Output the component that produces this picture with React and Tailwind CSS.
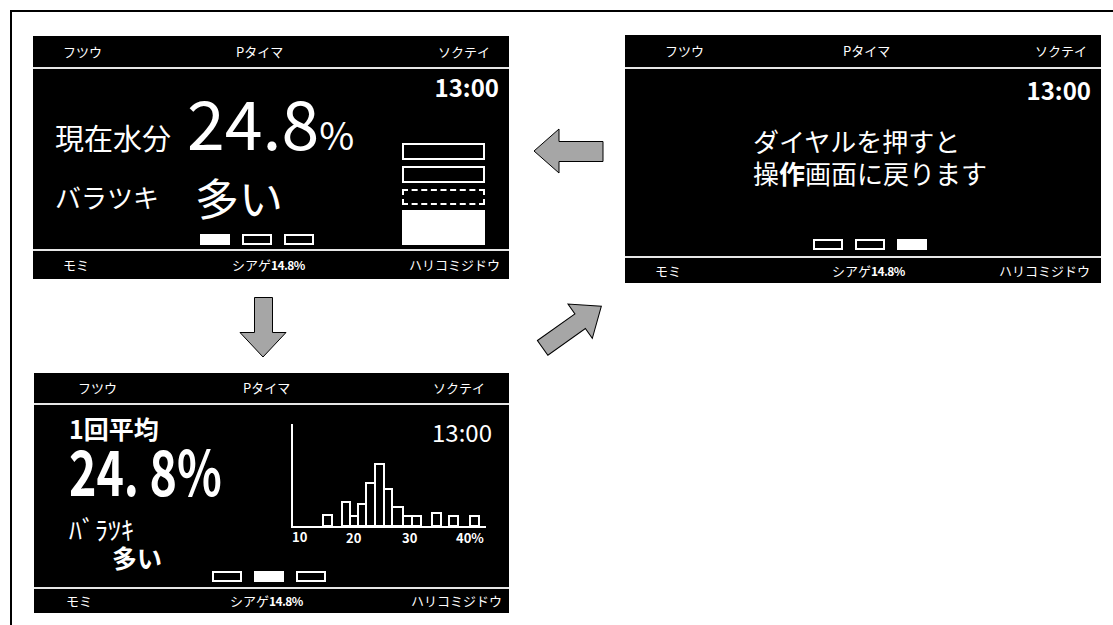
const jp = "font-['Noto_Sans_CJK_JP','Noto_Sans',sans-serif]";

function Rule() {
  return <div className="h-[2px] bg-[#e6e6e6]" />;
}

function Dots({ active, className }) {
  return (
    <div className={`flex gap-[12px] ${className}`}>
      {[0, 1, 2].map((i) => (
        <div
          key={i}
          className={`h-[11px] w-[30px] border-2 border-white ${i === active ? "bg-white" : ""}`}
        />
      ))}
    </div>
  );
}

function DownArrow() {
  return (
    <svg width="48" height="61" viewBox="0 0 48 61" className="block">
      <path d="M15.5 0.5H33.5V35.5H47L24 60L1 35.5H15.5Z" fill="#a6a6a6" stroke="#000" strokeWidth="1" />
    </svg>
  );
}

function LeftArrow() {
  return (
    <svg width="71" height="46" viewBox="0 0 71 46" className="block">
      <path d="M1 23L26 1V13.5H70V33.5H26V45Z" fill="#a6a6a6" stroke="#000" strokeWidth="1" />
    </svg>
  );
}

function DiagArrow() {
  return (
    <svg width="70" height="60" viewBox="0 0 70 60" className="block overflow-visible">
      <g transform="rotate(-35.4 35 30)">
        <path d="M-1 21H45V9L71 30L45 51V39H-1Z" fill="#a6a6a6" stroke="#000" strokeWidth="1" />
      </g>
    </svg>
  );
}

const bars = [
  [33, 93, 9],
  [52, 80, 8],
  [60, 94, 8],
  [68, 82, 8],
  [76, 61, 9],
  [85, 42, 9],
  [94, 67, 8],
  [102, 85, 11],
  [113, 94, 9],
  [122, 94, 9],
  [142, 91, 9],
  [159, 94, 9],
  [180, 94, 9],
];

function Histogram() {
  return (
    <svg width="200" height="125" viewBox="0 0 200 125" className="block">
      {bars.map(([x, top, w], i) => (
        <rect key={i} x={x} y={top} width={w} height={104 - top} fill="none" stroke="#fff" strokeWidth="2" />
      ))}
      <path d="M2 2V105H196" fill="none" stroke="#fff" strokeWidth="2" />
      <g fill="#fff" fontSize="13" fontWeight="700" fontFamily="'Noto Sans CJK JP', 'Noto Sans', sans-serif">
        <text x="2" y="120">10</text>
        <text x="56" y="121">20</text>
        <text x="112" y="121">30</text>
        <text x="166" y="121">40%</text>
      </g>
    </svg>
  );
}

export default function App() {
  return (
    <div className={`${jp} bg-white`}>
      <div className="ml-[10px] mt-[10px] flex h-[615px] w-[1103px] items-start border-l-2 border-t-2 border-black text-white">
        {/* left column */}
        <div className="ml-[21px] mt-[24px] flex w-[476px] flex-col">
          <div className="flex h-[243px] flex-col bg-black">
            <div className="flex h-[31px] items-center pl-[30px] pr-[19px] text-[13px]">
              <span className="w-[173px]">フツウ</span>
              <span>Pタイマ</span>
              <span className="ml-auto">ソクテイ</span>
            </div>
            <Rule />
            <div className="flex flex-1 pr-[10px]">
              <div className="flex flex-col pl-[22px]">
                <div className="mt-[18px] flex items-baseline leading-none">
                  <span className="text-[29px]">現在水分</span>
                  <span className="ml-[16px] text-[68px]">24.8</span>
                  <span className="text-[38px]">%</span>
                </div>
                <div className="mt-[20px] flex items-center leading-none">
                  <span className="text-[26px]">バラツキ</span>
                  <span className="ml-[36px] text-[44px]">多い</span>
                </div>
                <Dots active={0} className="ml-[145px] mt-[15px]" />
              </div>
              <div className="ml-auto flex w-[97px] flex-col">
                <div className="mt-[6px] text-right text-[24px] font-bold leading-none">13:00</div>
                <div className="mt-[44px] h-[17px] w-[83px] border-2 border-white" />
                <div className="mt-[6px] h-[17px] w-[83px] border-2 border-white" />
                <div className="mt-[6px] h-[16px] w-[83px] border-2 border-dashed border-white" />
                <div className="mt-[5px] h-[35px] w-[83px] bg-white" />
              </div>
            </div>
            <Rule />
            <div className="flex h-[28px] items-center pl-[30px] pr-[9px] text-[13px]">
              <span className="w-[169px]">モミ</span>
              <span>
                シアゲ<span className="text-[12px] font-bold tracking-tighter">14.8%</span>
              </span>
              <span className="ml-auto">ハリコミジドウ</span>
            </div>
          </div>

          <div className="ml-[206px] mt-[18px]">
            <DownArrow />
          </div>

          <div className="ml-[1px] mt-[15px] flex h-[240px] w-[475px] flex-col bg-black">
            <div className="flex h-[30px] items-center pl-[44px] pr-[24px] text-[13px]">
              <span className="w-[165px]">フツウ</span>
              <span>Pタイマ</span>
              <span className="ml-auto">ソクテイ</span>
            </div>
            <Rule />
            <div className="flex flex-1 flex-col">
              <div className="flex items-start">
                <div className="flex w-[256px] flex-col pl-[35px]">
                  <div className="mt-[11px] text-[25px] font-bold leading-none">1回平均</div>
                  <div className="mt-[3px] h-[50px]">
                    <span className="inline-block origin-left scale-x-[0.75] text-[62px] font-bold leading-[50px]">
                      24.&nbsp;8%
                    </span>
                  </div>
                  <div className="mt-[22px] text-[26px] leading-none">ﾊﾞﾗﾂｷ</div>
                  <div className="ml-[43px] mt-[3px] text-[25px] font-bold leading-none">多い</div>
                </div>
                <div className="relative mt-[17px]">
                  <Histogram />
                  <div className="absolute right-[-2px] top-[-2px] text-[24px] leading-none">13:00</div>
                </div>
              </div>
              <Dots active={1} className="ml-[178px] mt-[1px]" />
            </div>
            <Rule />
            <div className="flex h-[24px] items-center pl-[32px] pr-[7px] text-[13px]">
              <span className="w-[164px]">モミ</span>
              <span>
                シアゲ<span className="text-[12px] font-bold tracking-tighter">14.8%</span>
              </span>
              <span className="ml-auto">ハリコミジドウ</span>
            </div>
          </div>
        </div>

        {/* arrows */}
        <div className="flex w-[116px] flex-col">
          <div className="ml-[24px] mt-[116px]">
            <LeftArrow />
          </div>
          <div className="ml-[28px] mt-[123px]">
            <DiagArrow />
          </div>
        </div>

        {/* right panel */}
        <div className="mt-[23px] flex h-[248px] w-[476px] flex-col bg-black">
          <div className="flex h-[32px] items-center pl-[40px] pr-[14px] text-[13px]">
            <span className="w-[178px]">フツウ</span>
            <span>Pタイマ</span>
            <span className="ml-auto">ソクテイ</span>
          </div>
          <Rule />
          <div className="flex flex-1 flex-col">
            <div className="mt-[9px] pr-[10px] text-right text-[24px] font-bold leading-none">13:00</div>
            <div className="mt-[23px] pl-[128px] text-[26px] leading-[32px]">
              <div>ダイヤルを押すと</div>
              <div>
                操<span className="font-bold">作</span>画面に戻ります
              </div>
            </div>
            <Dots active={2} className="ml-[188px] mt-[50px]" />
          </div>
          <Rule />
          <div className="flex h-[25px] items-center pl-[30px] pr-[11px] text-[13px]">
            <span className="w-[177px]">モミ</span>
            <span>
              シアゲ<span className="text-[12px] font-bold tracking-tighter">14.8%</span>
            </span>
            <span className="ml-auto">ハリコミジドウ</span>
          </div>
        </div>
      </div>
    </div>
  );
}
